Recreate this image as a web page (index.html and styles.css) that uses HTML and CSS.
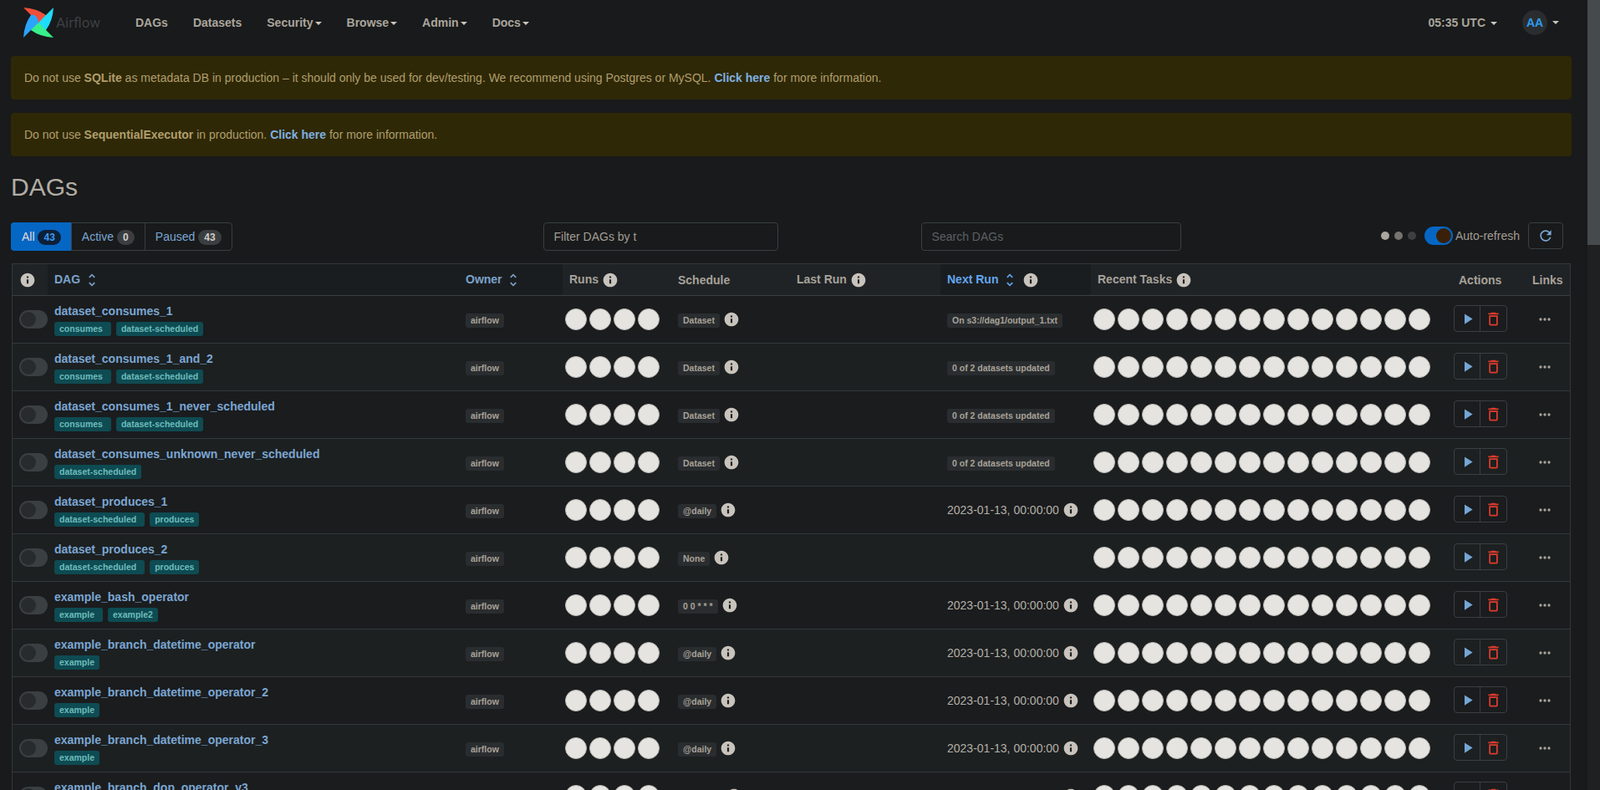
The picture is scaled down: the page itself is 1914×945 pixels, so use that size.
FILE: index.html
```html
<!DOCTYPE html>
<html>
<head>
<meta charset="utf-8">
<title>DAGs - Airflow</title>
<link rel="stylesheet" href="styles.css">
</head>
<body>

<svg class="sprite" xmlns="http://www.w3.org/2000/svg">
	<symbol id="i-info" viewBox="0 0 24 24"><path d="M12 2C6.48 2 2 6.48 2 12s4.48 10 10 10 10-4.48 10-10S17.52 2 12 2zm1.3 15h-2.6v-6h2.6v6zm0-8h-2.6V6.6h2.6V9z"/></symbol>
	<symbol id="i-sort" viewBox="0 0 24 24"><path d="M12 5.83L15.17 9l1.41-1.41L12 3 7.41 7.59 8.83 9 12 5.83zm0 12.34L8.83 15l-1.41 1.41L12 21l4.59-4.59L15.17 15 12 18.17z"/></symbol>
	<symbol id="i-play" viewBox="0 0 24 24"><path d="M8 5v14l11-7z"/></symbol>
	<symbol id="i-trash" viewBox="0 0 24 24"><path d="M6 19c0 1.1.9 2 2 2h8c1.100 0 2-.9 2-2V7H6v12zM8 9h8v10H8V9zm7.500-5l-1-1h-5l-1 1H5v2h14V4z"/></symbol>
	<symbol id="i-more" viewBox="0 0 24 24"><circle cx="6" cy="12" r="2"/><circle cx="12" cy="12" r="2"/><circle cx="18" cy="12" r="2"/></symbol>
	<symbol id="i-refresh" viewBox="0 0 24 24"><path d="M17.650 6.350A7.958 7.958 0 0012 4c-4.420 0-7.990 3.580-7.990 8s3.570 8 7.990 8c3.730 0 6.840-2.550 7.730-6h-2.080A5.990 5.990 0 0112 18c-3.310 0-6-2.690-6-6s2.690-6 6-6c1.660 0 3.140.690 4.220 1.780L13 11h7V4l-2.350 2.350z"/></symbol>
</svg>

<div class="page">

	<nav class="navbar">
		<a class="brand">
			<svg class="brand-pin" viewBox="0 0 36 36">
				<path fill="#ef4e3a" d="M0 0Q16 1 27 9 29 16 18 18Z"/>
				<path fill="#1fdcfb" d="M0 0Q16 1 27 9 29 16 18 18Z" transform="rotate(90 18 18)"/>
				<path fill="#37ef8b" d="M0 0Q16 1 27 9 29 16 18 18Z" transform="rotate(180 18 18)"/>
				<path fill="#2aa5fb" d="M0 0Q16 1 27 9 29 16 18 18Z" transform="rotate(270 18 18)"/>
			</svg>
			<span class="brand-name">Airflow</span>
		</a>
		<ul class="nav-menu">
			<li>DAGs</li>
			<li>Datasets</li>
			<li>Security<i class="caret"></i></li>
			<li>Browse<i class="caret"></i></li>
			<li>Admin<i class="caret"></i></li>
			<li>Docs<i class="caret"></i></li>
		</ul>
		<div class="nav-right">
			<span class="clock">05:35 UTC<i class="caret"></i></span>
			<span class="avatar">AA</span><i class="caret"></i>
		</div>
	</nav>

	<main class="content">
		<div class="alert">Do not use <b>SQLite</b> as metadata DB in production – it should only be used for dev/testing. We recommend using Postgres or MySQL. <a>Click here</a> for more information.</div>
		<div class="alert">Do not use <b>SequentialExecutor</b> in production. <a>Click here</a> for more information.</div>

		<h1>DAGs</h1>

		<div class="toolbar">
			<div class="tabs">
				<a class="tab active">All <span class="count">43</span></a>
				<a class="tab">Active <span class="count">0</span></a>
				<a class="tab">Paused <span class="count">43</span></a>
			</div>
			<div class="field field-tags">Filter DAGs by t</div>
			<div class="field field-search">Search DAGs</div>
			<div class="refresh-box">
				<span class="dots"><i></i><i></i><i></i></span>
				<span class="switch on"></span>
				<span class="refresh-label">Auto-refresh</span>
				<button class="refresh-btn"><svg class="icon"><use href="#i-refresh"/></svg></button>
			</div>
		</div>

		<table class="dags">
			<colgroup>
				<col class="c-toggle"><col class="c-dag"><col class="c-owner"><col class="c-runs"><col class="c-schedule">
				<col class="c-last"><col class="c-next"><col class="c-tasks"><col class="c-actions"><col class="c-links">
			</colgroup>
			<thead>
				<tr>
					<th><svg class="icon info"><use href="#i-info"/></svg></th>
					<th class="sortable">DAG <svg class="icon sort"><use href="#i-sort"/></svg></th>
					<th class="sortable">Owner <svg class="icon sort"><use href="#i-sort"/></svg></th>
					<th>Runs <svg class="icon info"><use href="#i-info"/></svg></th>
					<th>Schedule</th>
					<th>Last Run <svg class="icon info"><use href="#i-info"/></svg></th>
					<th class="sortable sorted">Next Run <svg class="icon sort"><use href="#i-sort"/></svg> <svg class="icon info"><use href="#i-info"/></svg></th>
					<th>Recent Tasks <svg class="icon info"><use href="#i-info"/></svg></th>
					<th class="th-actions">Actions</th>
					<th>Links</th>
				</tr>
			</thead>
			<tbody id="rows"></tbody>
		</table>
	</main>
</div>

<div class="scrollbar"><div class="thumb"></div></div>

<script src="app.js"></script>
</body>
</html>
```

FILE: styles.css
```css
html, body {
	margin: 0;
	height: 100%;
	overflow: hidden;
}

body {
	display: flex;
	background-color: #181a1b;
	color: #b5afa6;
	font-family: "Liberation Sans", Arial, sans-serif;
	font-size: 14px;
	line-height: 20px;
}

.sprite {
	display: none;
}

.page {
	flex: 1;
	min-width: 0;
	height: 100%;
	overflow: hidden;
}

.scrollbar {
	width: 15px;
	background-color: #1e2021;
}

.thumb {
	height: 293px;
	background-color: #454a4d;
}

.icon {
	width: 20px;
	height: 20px;
	fill: currentColor;
	vertical-align: middle;
}

/* top bar */
.navbar {
	display: flex;
	align-items: center;
	height: 54px;
	padding-left: 28px;
	padding-right: 34px;
	color: #aba59c;
	font-weight: bold;
}

.brand {
	display: flex;
	align-items: center;
	width: 134px;
}

.brand-pin {
	width: 36px;
	height: 36px;
}

.brand-name {
	margin-left: 3px;
	color: #3c4043;
	font-size: 17px;
	font-weight: normal;
	font-family: Roboto, "Liberation Sans", sans-serif;
}

.nav-menu {
	display: flex;
	gap: 30px;
	margin: 0;
	padding: 0;
	list-style: none;
}

.caret {
	display: inline-block;
	margin-left: 2px;
	vertical-align: middle;
	border-top: 4px solid #c8c3bc;
	border-left: 4px solid transparent;
	border-right: 4px solid transparent;
}

.nav-right {
	display: flex;
	align-items: center;
	margin-left: auto;
}

.clock .caret {
	margin-left: 6px;
}

.avatar {
	width: 30px;
	height: 30px;
	margin-left: 30px;
	margin-right: 4px;
	border-radius: 50%;
	background-color: #2a2d2f;
	color: #2f9bf0;
	line-height: 31px;
	text-align: center;
}

/* page */
.content {
	padding: 13px 19px 0 13px;
}

.alert {
	height: 52px;
	margin-bottom: 16px;
	padding: 16px 16px 0;
	box-sizing: border-box;
	border-radius: 4px;
	background-color: #2e2806;
	color: #b19e6c;
}

.alert a {
	color: #7fb0e0;
	font-weight: bold;
}

h1 {
	margin: 20px 0 26px;
	color: #b3ada4;
	font-size: 30px;
	font-weight: normal;
	line-height: 33px;
}

.toolbar {
	display: flex;
	align-items: flex-start;
	margin-bottom: 15px;
	padding-right: 10px;
}

.tabs {
	display: flex;
	height: 34px;
	box-sizing: border-box;
	border: 1px solid #3a3f42;
	border-radius: 4px;
}

.tab {
	padding: 6px 12px;
	border-left: 1px solid #3a3f42;
	color: #7ba6d2;
}

.tab:first-child {
	border-left: 0;
}

.tab.active {
	margin: -1px 0 -1px -1px;
	padding: 7px 12px 7px 13px;
	border-radius: 4px 0 0 4px;
	background-color: #0566c4;
	color: #e0ddd8;
}

.count {
	display: inline-block;
	min-width: 7px;
	padding: 3px 7px;
	border-radius: 10px;
	background-color: #3a3e41;
	color: #d0ccc6;
	font-size: 12px;
	font-weight: bold;
	line-height: 12px;
	text-align: center;
}

.active .count {
	background-color: #0c2038;
	color: #3b9cf0;
}

.field {
	height: 34px;
	box-sizing: border-box;
	padding: 6px 12px;
	border: 1px solid #3a3f42;
	border-radius: 4px;
}

.field-tags {
	width: 281px;
	margin-left: 372px;
	color: #a39d94;
}

.field-search {
	width: 311px;
	margin-left: 171px;
	color: #5c6164;
}

.refresh-box {
	display: flex;
	align-items: center;
	height: 32px;
	margin-left: auto;
}

.dots {
	display: flex;
	gap: 6px;
	margin-right: 10px;
}

.dots i {
	width: 10px;
	height: 10px;
	border-radius: 50%;
	background-color: #aaa59d;
}

.dots i:nth-child(2) {
	background-color: #77746f;
}

.dots i:nth-child(3) {
	background-color: #3d3f40;
}

.switch {
	display: inline-block;
	position: relative;
	width: 34px;
	height: 22px;
	box-sizing: border-box;
	border-radius: 11px;
	background-color: #3a3f42;
}

.switch::after {
	content: "";
	position: absolute;
	top: 2px;
	left: 2px;
	width: 18px;
	height: 18px;
	border-radius: 50%;
	background-color: #282b2d;
}

.switch.on {
	background-color: #0566c4;
}

.switch.on::after {
	left: 14px;
	background-color: #3a2008;
}

.refresh-label {
	margin-left: 3px;
	color: #a39d94;
}

.refresh-btn {
	width: 42px;
	height: 32px;
	margin-left: 10px;
	padding: 0;
	border: 1px solid #3a3f42;
	border-radius: 4px;
	background: none;
	color: #7ba6d2;
}

/* table */
.dags {
	width: 1865px;
	margin-left: 1px;
	border: 1px solid #33383a;
	border-bottom: 0;
	border-spacing: 0;
	table-layout: fixed;
}

.c-toggle { width: 42px; }
.c-dag { width: 492px; }
.c-owner { width: 124px; }
.c-runs { width: 130px; }
.c-schedule { width: 142px; }
.c-last { width: 180px; }
.c-next { width: 180px; }
.c-tasks { width: 426px; }
.c-actions { width: 94px; }
.c-links { width: 53px; }

th {
	height: 38px;
	padding: 0 8px;
	box-sizing: border-box;
	border-bottom: 1px solid #3a3f42;
	background-color: #1f2326;
	color: #a8a299;
	text-align: left;
	white-space: nowrap;
}

th.sortable {
	background-color: #1a1d1f;
	color: #7ba2cb;
}

th.sorted {
	color: #62a6ef;
}

th.th-actions {
	padding-left: 14px;
}

th .info {
	color: #c8c3bc;
}

th .sort + .info {
	margin-left: 1px;
}

td {
	height: 57px;
	padding: 0 8px;
	box-sizing: border-box;
	border-bottom: 1px solid #33383a;
	white-space: nowrap;
}

tbody tr:nth-child(odd) td {
	background-color: #1a1c1e;
}

tbody tr:nth-child(even) td {
	background-color: #1c2021;
}

td.toggle {
	padding-top: 4px;
}

.cell-dag {
	padding-top: 8px;
	vertical-align: top;
}

.dag-name {
	display: block;
	color: #7ba6d2;
	font-weight: bold;
}

.tags {
	display: flex;
	gap: 6px;
	margin-top: 3px;
}

.label {
	display: inline-block;
	padding: 0 6px;
	border-radius: 3px;
	background-color: #2a2d2f;
	color: #a8a299;
	font-size: 10.5px;
	font-weight: bold;
	line-height: 17px;
}

.label.tag {
	background-color: #0e4b52;
	color: #6cbcbc;
}

.label.tag:not(:last-child) {
	padding-right: 10px;
}

.schedule .info,
.next-run .info {
	margin-top: -2px;
	color: #c8c3bc;
}

.cell-circles {
	padding-left: 3px;
	font-size: 0;
}

.circle {
	display: inline-block;
	width: 26px;
	height: 26px;
	box-sizing: border-box;
	margin-right: 3px;
	border: 1px solid #bdbab4;
	border-radius: 50%;
	background-color: #e6e4e0;
	vertical-align: middle;
}

.cell-actions {
	padding: 0 0 2px 8px;
}

.btn-group {
	display: inline-flex;
	height: 32px;
	box-sizing: border-box;
	border: 1px solid #3a3f42;
	border-radius: 4px;
	vertical-align: middle;
}

.btn-group span {
	display: flex;
	align-items: center;
	justify-content: center;
	width: 30px;
}

.btn-group span + span {
	width: 31px;
	border-left: 1px solid #3a3f42;
}

.btn-group .icon {
	width: 21px;
	height: 21px;
}

.run {
	color: #74a6d6;
}

.delete {
	color: #df3b2c;
}

.cell-links {
	padding: 0 0 2px 13px;
	color: #a8a299;
}
```

FILE: app.js
```js
var both = ["consumes", "dataset-scheduled"];
var prod = ["dataset-scheduled", "produces"];
var date = "2023-01-13, 00:00:00";

var dags = [
	{ name: "dataset_consumes_1", tags: both, schedule: "Dataset", badge: "On s3://dag1/output_1.txt" },
	{ name: "dataset_consumes_1_and_2", tags: both, schedule: "Dataset", badge: "0 of 2 datasets updated" },
	{ name: "dataset_consumes_1_never_scheduled", tags: both, schedule: "Dataset", badge: "0 of 2 datasets updated" },
	{ name: "dataset_consumes_unknown_never_scheduled", tags: ["dataset-scheduled"], schedule: "Dataset", badge: "0 of 2 datasets updated" },
	{ name: "dataset_produces_1", tags: prod, schedule: "@daily", next: date },
	{ name: "dataset_produces_2", tags: prod, schedule: "None" },
	{ name: "example_bash_operator", tags: ["example", "example2"], schedule: "0 0 * * *", next: date },
	{ name: "example_branch_datetime_operator", tags: ["example"], schedule: "@daily", next: date },
	{ name: "example_branch_datetime_operator_2", tags: ["example"], schedule: "@daily", next: date },
	{ name: "example_branch_datetime_operator_3", tags: ["example"], schedule: "@daily", next: date },
	{ name: "example_branch_dop_operator_v3", tags: ["example"], schedule: "*/1 * * * *", next: date }
];

function icon(id, cls) {
	return "<svg class='icon " + (cls || "") + "'><use href='#i-" + id + "'/></svg>";
}

function circles(n) {
	var out = "";
	for (var i = 0; i < n; i++) {
		out += "<span class='circle'></span>";
	}
	return out;
}

function nextRun(dag) {
	if (dag.badge) {
		return "<span class='label'>" + dag.badge + "</span>";
	}
	if (dag.next) {
		return dag.next + " " + icon("info", "info");
	}
	return "";
}

var html = "";
for (var i = 0; i < dags.length; i++) {
	var dag = dags[i];
	var tags = "";
	for (var t = 0; t < dag.tags.length; t++) {
		tags += "<span class='label tag'>" + dag.tags[t] + "</span>";
	}
	html += "<tr>"
		+ "<td class='toggle'><span class='switch'></span></td>"
		+ "<td class='cell-dag'><a class='dag-name'>" + dag.name + "</a><div class='tags'>" + tags + "</div></td>"
		+ "<td><span class='label'>airflow</span></td>"
		+ "<td class='cell-circles'>" + circles(4) + "</td>"
		+ "<td class='schedule'><span class='label'>" + dag.schedule + "</span> " + icon("info", "info") + "</td>"
		+ "<td></td>"
		+ "<td class='next-run'>" + nextRun(dag) + "</td>"
		+ "<td class='cell-circles'>" + circles(14) + "</td>"
		+ "<td class='cell-actions'><div class='btn-group'><span class='run'>" + icon("play") + "</span><span class='delete'>" + icon("trash") + "</span></div></td>"
		+ "<td class='cell-links'>" + icon("more") + "</td>"
		+ "</tr>";
}
document.getElementById("rows").innerHTML = html;
```
